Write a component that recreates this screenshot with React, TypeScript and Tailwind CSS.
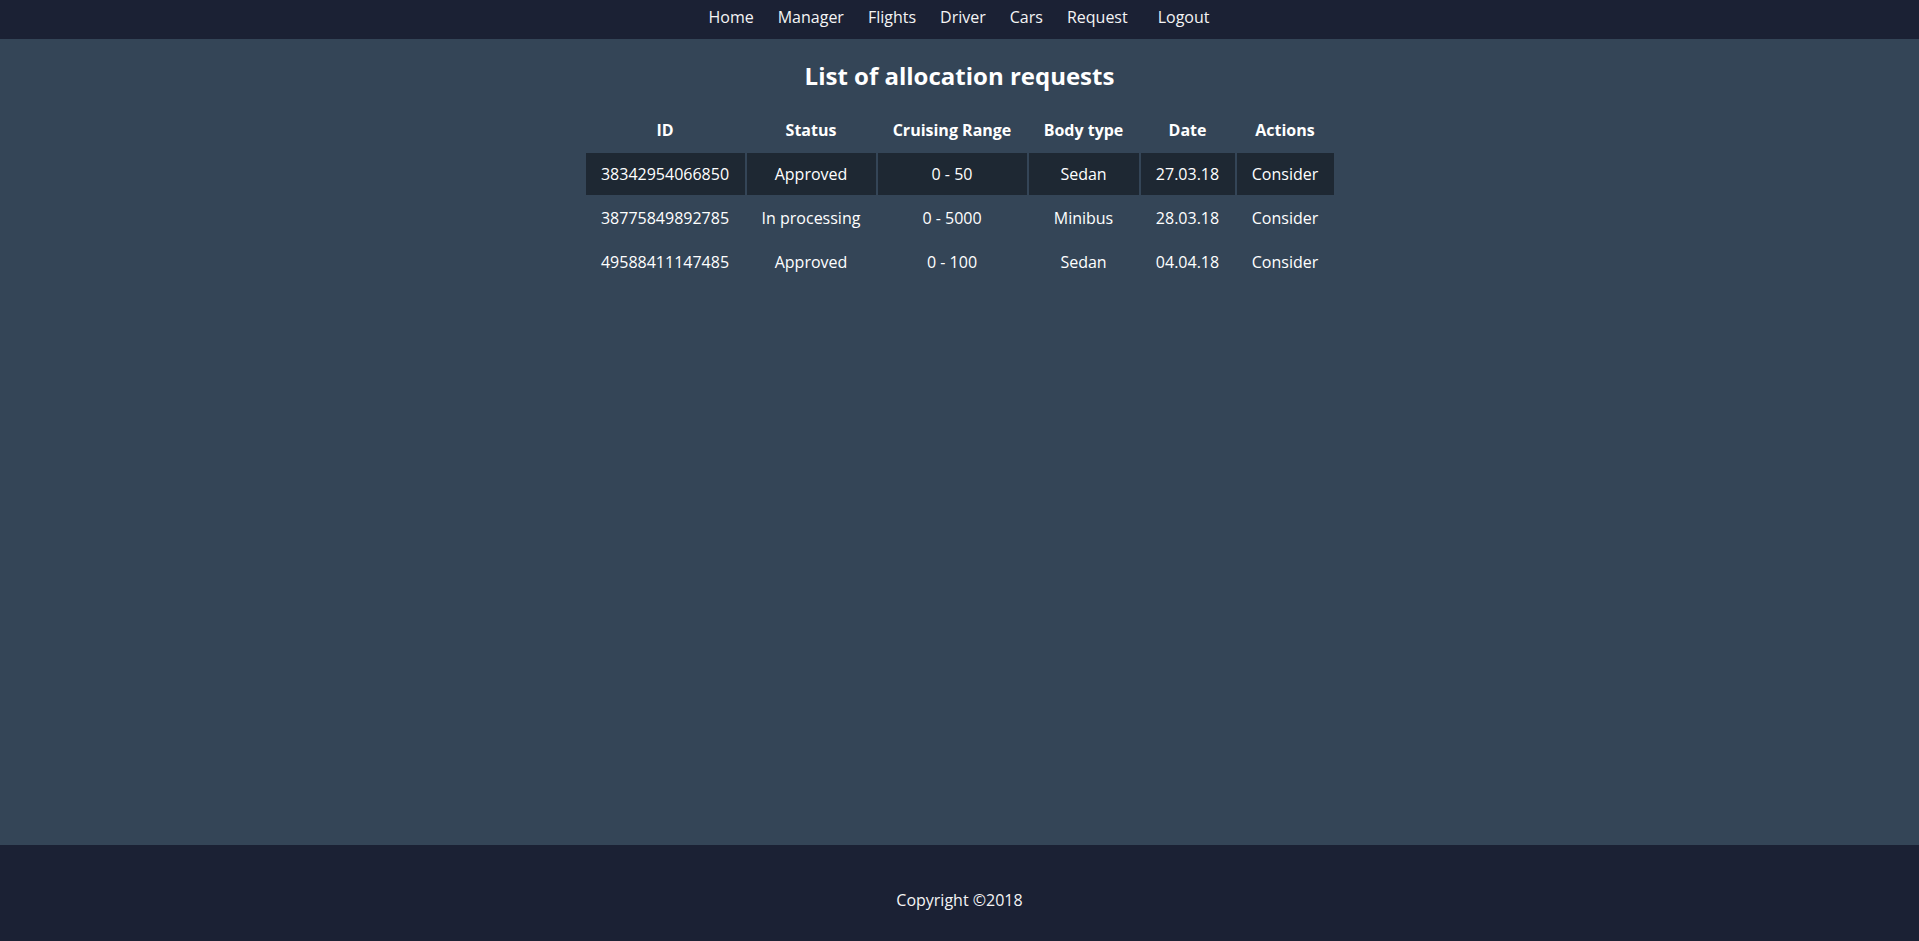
// Allocation requests page: top nav, table of requests, footer

const links = ["Home", "Manager", "Flights", "Driver", "Cars", "Request"];

const rows = [
    { id: "38342954066850", status: "Approved", range: "0 - 50", body: "Sedan", date: "27.03.18", active: true },
    { id: "38775849892785", status: "In processing", range: "0 - 5000", body: "Minibus", date: "28.03.18", active: false },
    { id: "49588411147485", status: "Approved", range: "0 - 100", body: "Sedan", date: "04.04.18", active: false },
];

export default function App() {
    return (
        <div className="min-h-[941px] flex flex-col text-white bg-[#344557] font-['Open_Sans',sans-serif] text-[16px]">

            {/* Nav */}
            <nav className="h-[39px] bg-[#1b2134] flex flex-row items-center justify-center pb-[5px]">
                <div className="flex flex-row items-center gap-[24px] ml-[-1px]">
                    {links.map((l) => (
                        <a key={l} className="text-[#f4f4f4] leading-[24px]">{l}</a>
                    ))}
                    <a className="text-[#f4f4f4] leading-[24px] ml-[6px]">Logout</a>
                </div>
            </nav>

            {/* Content */}
            <main className="flex-1 flex flex-col items-center">
                <h2 className="mt-[21px] text-[24px] leading-[32px] font-bold">List of allocation requests</h2>

                <table className="mt-[15px] border-separate border-spacing-[2px] text-center">
                    <thead>
                        <tr className="h-[42px]">
                            <th className="w-[159px] p-0 font-bold">ID</th>
                            <th className="w-[129px] p-0 font-bold">Status</th>
                            <th className="w-[149px] p-0 font-bold">Cruising Range</th>
                            <th className="w-[110px] p-0 font-bold">Body type</th>
                            <th className="w-[94px] p-0 font-bold">Date</th>
                            <th className="w-[97px] p-0 font-bold">Actions</th>
                        </tr>
                    </thead>
                    <tbody>
                        {rows.map((r) => (
                            <tr key={r.id} className={r.active ? "h-[42px] bg-[#1e2833]" : "h-[42px]"}>
                                <td className="p-0">{r.id}</td>
                                <td className="p-0">{r.status}</td>
                                <td className="p-0">{r.range}</td>
                                <td className="p-0">{r.body}</td>
                                <td className="p-0">{r.date}</td>
                                <td className="p-0">Consider</td>
                            </tr>
                        ))}
                    </tbody>
                </table>
            </main>

            {/* Footer */}
            <footer className="h-[96px] bg-[#1b2134] flex items-center justify-center">
                <p className="text-[#f4f4f4] mt-[14px]">Copyright ©2018</p>
            </footer>

        </div>
    )
}
